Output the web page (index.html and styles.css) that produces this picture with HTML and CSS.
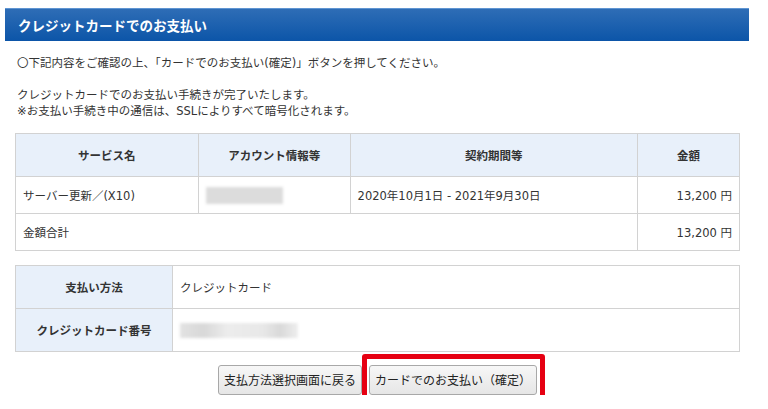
FILE: index.html
```html
<!DOCTYPE html>
<html lang="ja">
<head>
<meta charset="utf-8">
<link rel="stylesheet" href="styles.css">
</head>
<body>
<div class="page">
  <h1 class="title">クレジットカードでのお支払い</h1>
  <div class="content">
    <p class="lead">〇下記内容をご確認の上、「カードでのお支払い(確定)」ボタンを押してください。</p>
    <p class="note">クレジットカードでのお支払い手続きが完了いたします。<br>※お支払い手続き中の通信は、SSLによりすべて暗号化されます。</p>

    <table class="tbl order">
      <colgroup>
        <col class="c1"><col class="c2"><col class="c3"><col class="c4">
      </colgroup>
      <thead>
        <tr><th>サービス名</th><th>アカウント情報等</th><th>契約期間等</th><th>金額</th></tr>
      </thead>
      <tbody>
        <tr>
          <td>サーバー更新／(X10)</td>
          <td><span class="blur blur-acc"></span></td>
          <td>2020年10月1日 - 2021年9月30日</td>
          <td class="num">13,200 円</td>
        </tr>
        <tr>
          <td colspan="3">金額合計</td>
          <td class="num">13,200 円</td>
        </tr>
      </tbody>
    </table>

    <table class="tbl pay">
      <tr><th>支払い方法</th><td>クレジットカード</td></tr>
      <tr><th>クレジットカード番号</th><td><span class="blur blur-card"></span></td></tr>
    </table>

    <div class="actions">
      <button class="btn back">支払方法選択画面に戻る</button>
      <div class="confirm-wrap">
        <button class="btn confirm">カードでのお支払い（確定）</button>
        <span class="highlight"></span>
      </div>
    </div>
  </div>
</div>
</body>
</html>
```

FILE: styles.css
```css
* { box-sizing: border-box; }
html, body { margin: 0; padding: 0; background: #fff; }
body {
  font-family: "DejaVu Sans", "Noto Sans CJK JP", sans-serif;
  color: #333;
  font-size: 11.5px;
}
.page {
  width: 768px;
  padding: 8px 0 0 5px;
}
.title {
  margin: 0;
  width: 744px;
  height: 33px;
  padding: 0 0 0 13px;
  display: flex;
  align-items: center;
  font-family: "Noto Sans CJK JP", sans-serif;
  font-size: 13.5px;
  font-weight: bold;
  color: #fff;
  background: linear-gradient(#2e6db6, #0c55a8);
  border-top: 1px solid #5f95d2;
}
.content {
  padding: 0 0 0 10px;
  width: 735px;
}
.lead {
  margin: 14px 0 0;
  padding-left: 2px;
  line-height: 16px;
}
.note {
  margin: 16px 0 0;
  padding-left: 2px;
  line-height: 16px;
}
.tbl {
  width: 725px;
  border-collapse: collapse;
  border: 1px solid #d2d2d2;
}
.tbl th, .tbl td {
  border: 1px solid #d2d2d2;
  padding: 0 7px;
  font-size: 11.5px;
}
.tbl th {
  background: #e8f0fa;
  font-weight: bold;
  color: #333;
  text-align: center;
  font-family: "Noto Sans CJK JP", sans-serif;
}
.order { margin-top: 14px; }
.order .c1 { width: 183px; }
.order .c2 { width: 152px; }
.order .c3 { width: 288px; }
.order .c4 { width: 102px; }
.order thead tr { height: 43px; }
.order tbody tr { height: 37px; }
.num { text-align: right; }
.pay { margin-top: 14px; }
.pay tr { height: 43px; }
.pay th { width: 157px; }
.blur {
  display: inline-block;
  vertical-align: middle;
  background: #dcdcdc;
  filter: blur(1.5px);
}
.blur-acc { width: 77px; height: 17px; }
.blur-card { width: 118px; height: 15px; background: linear-gradient(90deg, #e2e2e2 0%, #d8d8d8 20%, #ececec 40%, #e8e8e8 70%, #d9d9d9 85%, #eeeeee 100%); }
.actions {
  margin-top: 13px;
  display: flex;
  justify-content: center;
  align-items: flex-start;
  gap: 7px;
  width: 725px;
}
.btn {
  display: block;
  height: 30px;
  font-family: "Noto Sans CJK JP", sans-serif;
  font-size: 12px;
  line-height: 28px;
  color: #222;
  background: linear-gradient(#f7f7f7, #e6e6e6);
  border: 1px solid #a8a8a8;
  border-radius: 3px;
  padding: 0;
}
.back { width: 144px; }
.confirm { width: 168px; }
.confirm-wrap { position: relative; height: 30px; }
.highlight {
  position: absolute;
  left: -7px;
  width: 183px;
  top: -11px;
  height: 50px;
  border: 5px solid #e60012;
  border-radius: 3px;
  pointer-events: none;
}
```
